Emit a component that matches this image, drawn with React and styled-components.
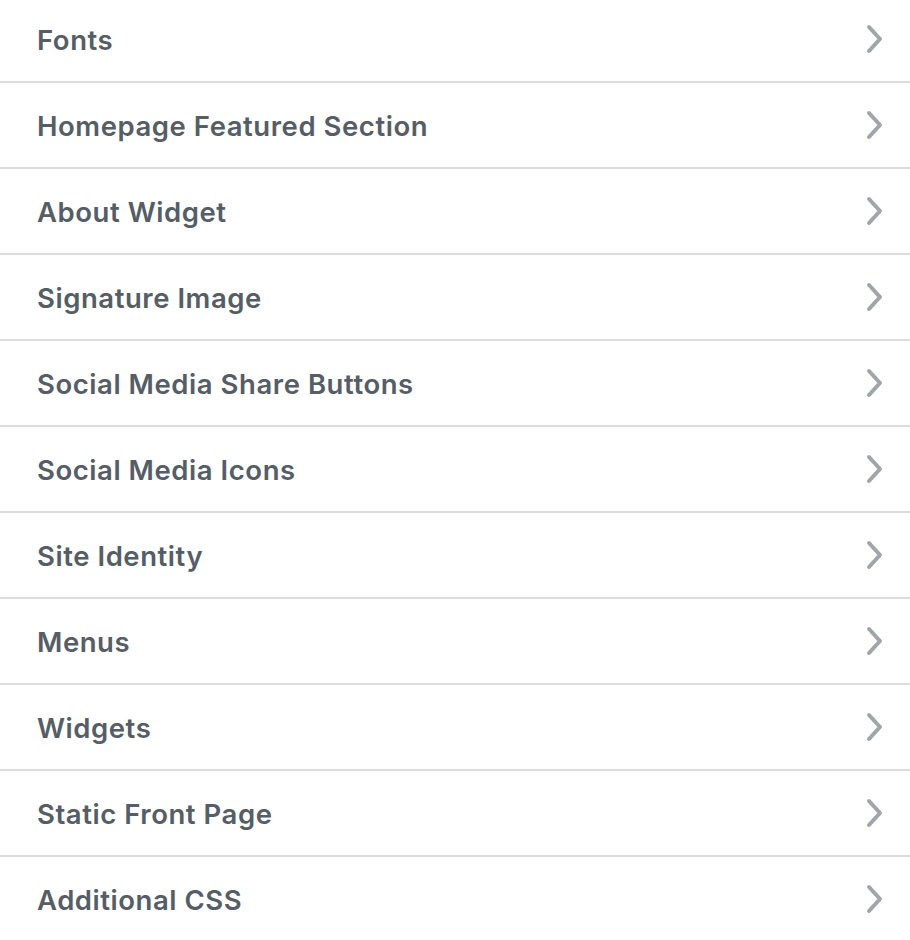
import React from 'react'
import styled, { createGlobalStyle } from 'styled-components'

const GlobalStyle = createGlobalStyle`
  body {
    margin: 0;
    background: #fff;
    font-family: Inter, "Noto Sans", "Liberation Sans", sans-serif;
  }
`

const sections = [
  'Fonts',
  'Homepage Featured Section',
  'About Widget',
  'Signature Image',
  'Social Media Share Buttons',
  'Social Media Icons',
  'Site Identity',
  'Menus',
  'Widgets',
  'Static Front Page',
  'Additional CSS',
]

const Chevron = () => (
  <svg width="20" height="30" viewBox="0 0 20 30">
    <path
      d="M4 3 L15 15 L4 27"
      fill="none"
      stroke="#a0a5aa"
      strokeWidth="4"
      strokeLinecap="round"
      strokeLinejoin="round"
    />
  </svg>
)

const App = () => {
  return (
    <>
      <GlobalStyle />
      <Panel>
        {sections.map((title) => (
          <Section key={title}>
            <Title>{title}</Title>
            <Arrow>
              <Chevron />
            </Arrow>
          </Section>
        ))}
      </Panel>
    </>
  )
}

const Panel = styled.ul`
  list-style: none;
  margin: -3px 0 0 0;
  padding: 0;
  width: 910px;
`

const Section = styled.li`
  display: flex;
  align-items: center;
  justify-content: space-between;
  height: 84px;
  padding: 0 25px 0 37px;
  border-bottom: 2px solid #dddddd;
  cursor: pointer;

  &:last-child {
    border-bottom: none;
  }
`

const Title = styled.h3`
  margin: 2px 0 0 0;
  font-size: 27.5px;
  font-weight: 600;
  color: #555d66;
  letter-spacing: 0.55px;
`

const Arrow = styled.span`
  display: flex;
  align-items: center;
`

export default App
